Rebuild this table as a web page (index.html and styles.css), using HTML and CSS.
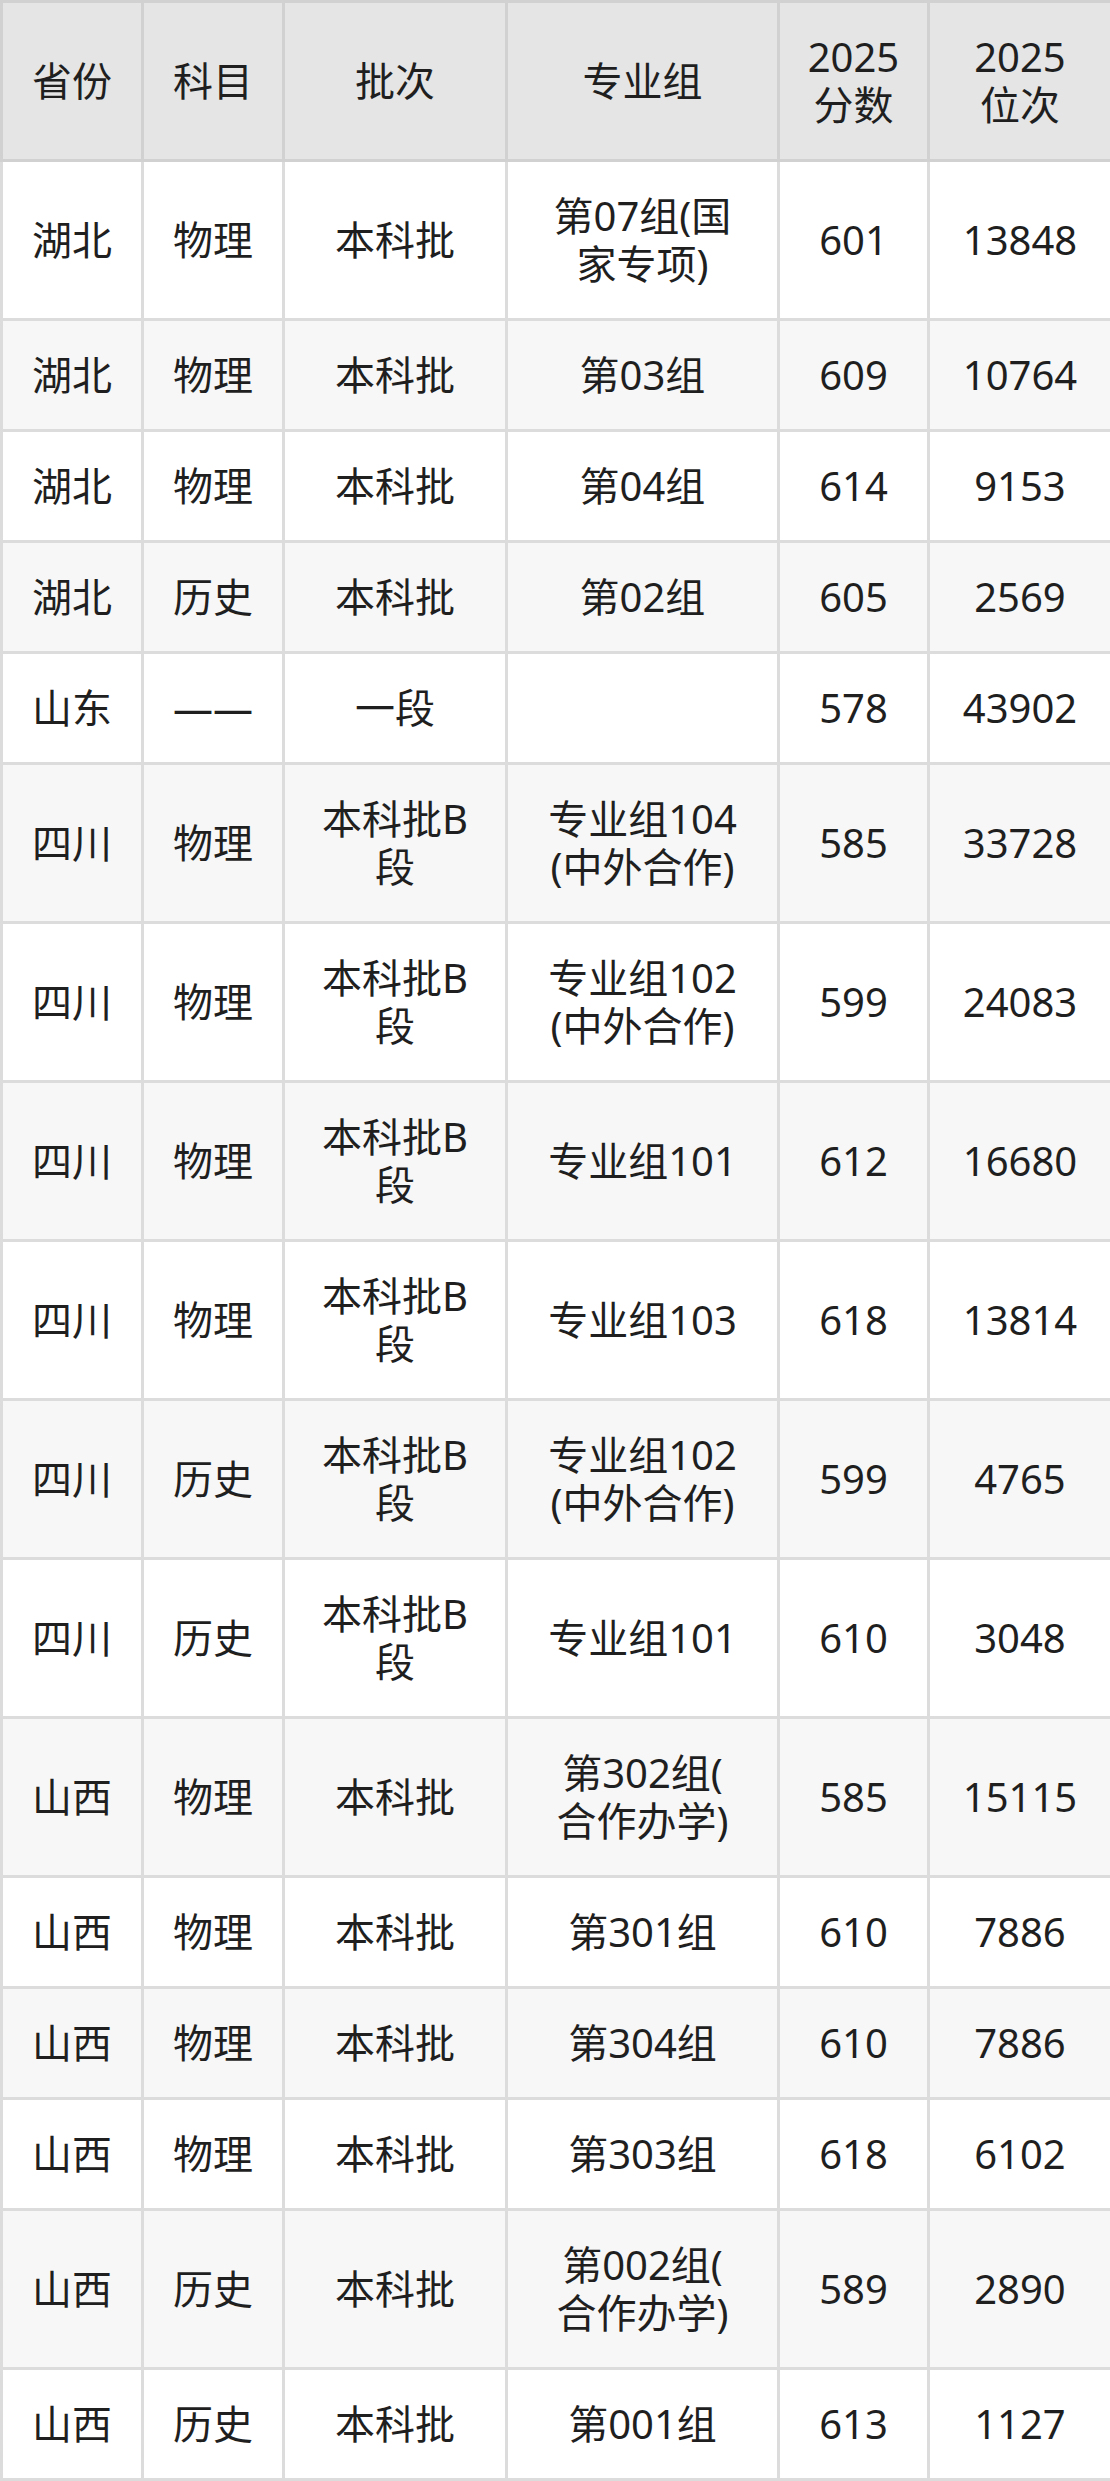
FILE: index.html
```html
<!DOCTYPE html>
<html lang="zh-CN">
<head>
<meta charset="utf-8">
<title>录取分数</title>
<link rel="stylesheet" href="styles.css">
</head>
<body>
<table class="score-table">
  <colgroup>
    <col class="c-prov">
    <col class="c-subj">
    <col class="c-batch">
    <col class="c-group">
    <col class="c-score">
    <col class="c-rank">
  </colgroup>
  <thead>
    <tr>
      <th>省份</th>
      <th>科目</th>
      <th>批次</th>
      <th>专业组</th>
      <th>2025<br>分数</th>
      <th>2025<br>位次</th>
    </tr>
  </thead>
  <tbody>
    <tr><td>湖北</td><td>物理</td><td>本科批</td><td>第07组(国<br>家专项)</td><td>601</td><td>13848</td></tr>
    <tr><td>湖北</td><td>物理</td><td>本科批</td><td>第03组</td><td>609</td><td>10764</td></tr>
    <tr><td>湖北</td><td>物理</td><td>本科批</td><td>第04组</td><td>614</td><td>9153</td></tr>
    <tr><td>湖北</td><td>历史</td><td>本科批</td><td>第02组</td><td>605</td><td>2569</td></tr>
    <tr><td>山东</td><td>——</td><td>一段</td><td></td><td>578</td><td>43902</td></tr>
    <tr><td>四川</td><td>物理</td><td>本科批B<br>段</td><td>专业组104<br>(中外合作)</td><td>585</td><td>33728</td></tr>
    <tr><td>四川</td><td>物理</td><td>本科批B<br>段</td><td>专业组102<br>(中外合作)</td><td>599</td><td>24083</td></tr>
    <tr><td>四川</td><td>物理</td><td>本科批B<br>段</td><td>专业组101</td><td>612</td><td>16680</td></tr>
    <tr><td>四川</td><td>物理</td><td>本科批B<br>段</td><td>专业组103</td><td>618</td><td>13814</td></tr>
    <tr><td>四川</td><td>历史</td><td>本科批B<br>段</td><td>专业组102<br>(中外合作)</td><td>599</td><td>4765</td></tr>
    <tr><td>四川</td><td>历史</td><td>本科批B<br>段</td><td>专业组101</td><td>610</td><td>3048</td></tr>
    <tr><td>山西</td><td>物理</td><td>本科批</td><td>第302组(<br>合作办学)</td><td>585</td><td>15115</td></tr>
    <tr><td>山西</td><td>物理</td><td>本科批</td><td>第301组</td><td>610</td><td>7886</td></tr>
    <tr><td>山西</td><td>物理</td><td>本科批</td><td>第304组</td><td>610</td><td>7886</td></tr>
    <tr><td>山西</td><td>物理</td><td>本科批</td><td>第303组</td><td>618</td><td>6102</td></tr>
    <tr><td>山西</td><td>历史</td><td>本科批</td><td>第002组(<br>合作办学)</td><td>589</td><td>2890</td></tr>
    <tr><td>山西</td><td>历史</td><td>本科批</td><td>第001组</td><td>613</td><td>1127</td></tr>
  </tbody>
</table>
</body>
</html>
```

FILE: styles.css
```css
html, body {
  margin: 0;
  padding: 0;
  background: #ffffff;
}

body {
  font-family: "Noto Sans", "Noto Sans CJK SC", sans-serif;
  color: #1f1f1f;
}

.score-table {
  width: 1110px;
  border-collapse: collapse;
  table-layout: fixed;
  font-size: 40px;
  line-height: 48px;
}

.c-prov { width: 141px; }
.c-subj { width: 141px; }
.c-batch { width: 223px; }
.c-group { width: 272px; }
.c-score { width: 150px; }
.c-rank { width: 183px; }

.score-table th,
.score-table td {
  padding: 30px 4px;
  text-align: center;
  vertical-align: middle;
  white-space: nowrap;
}

.score-table th {
  background: #e5e5e5;
  border: 3px solid #d1d1d1;
  font-weight: normal;
}

.score-table td {
  border: 3px solid #dcdcdc;
}

.score-table tbody tr:nth-child(even) td {
  background: #f7f7f7;
}
```
